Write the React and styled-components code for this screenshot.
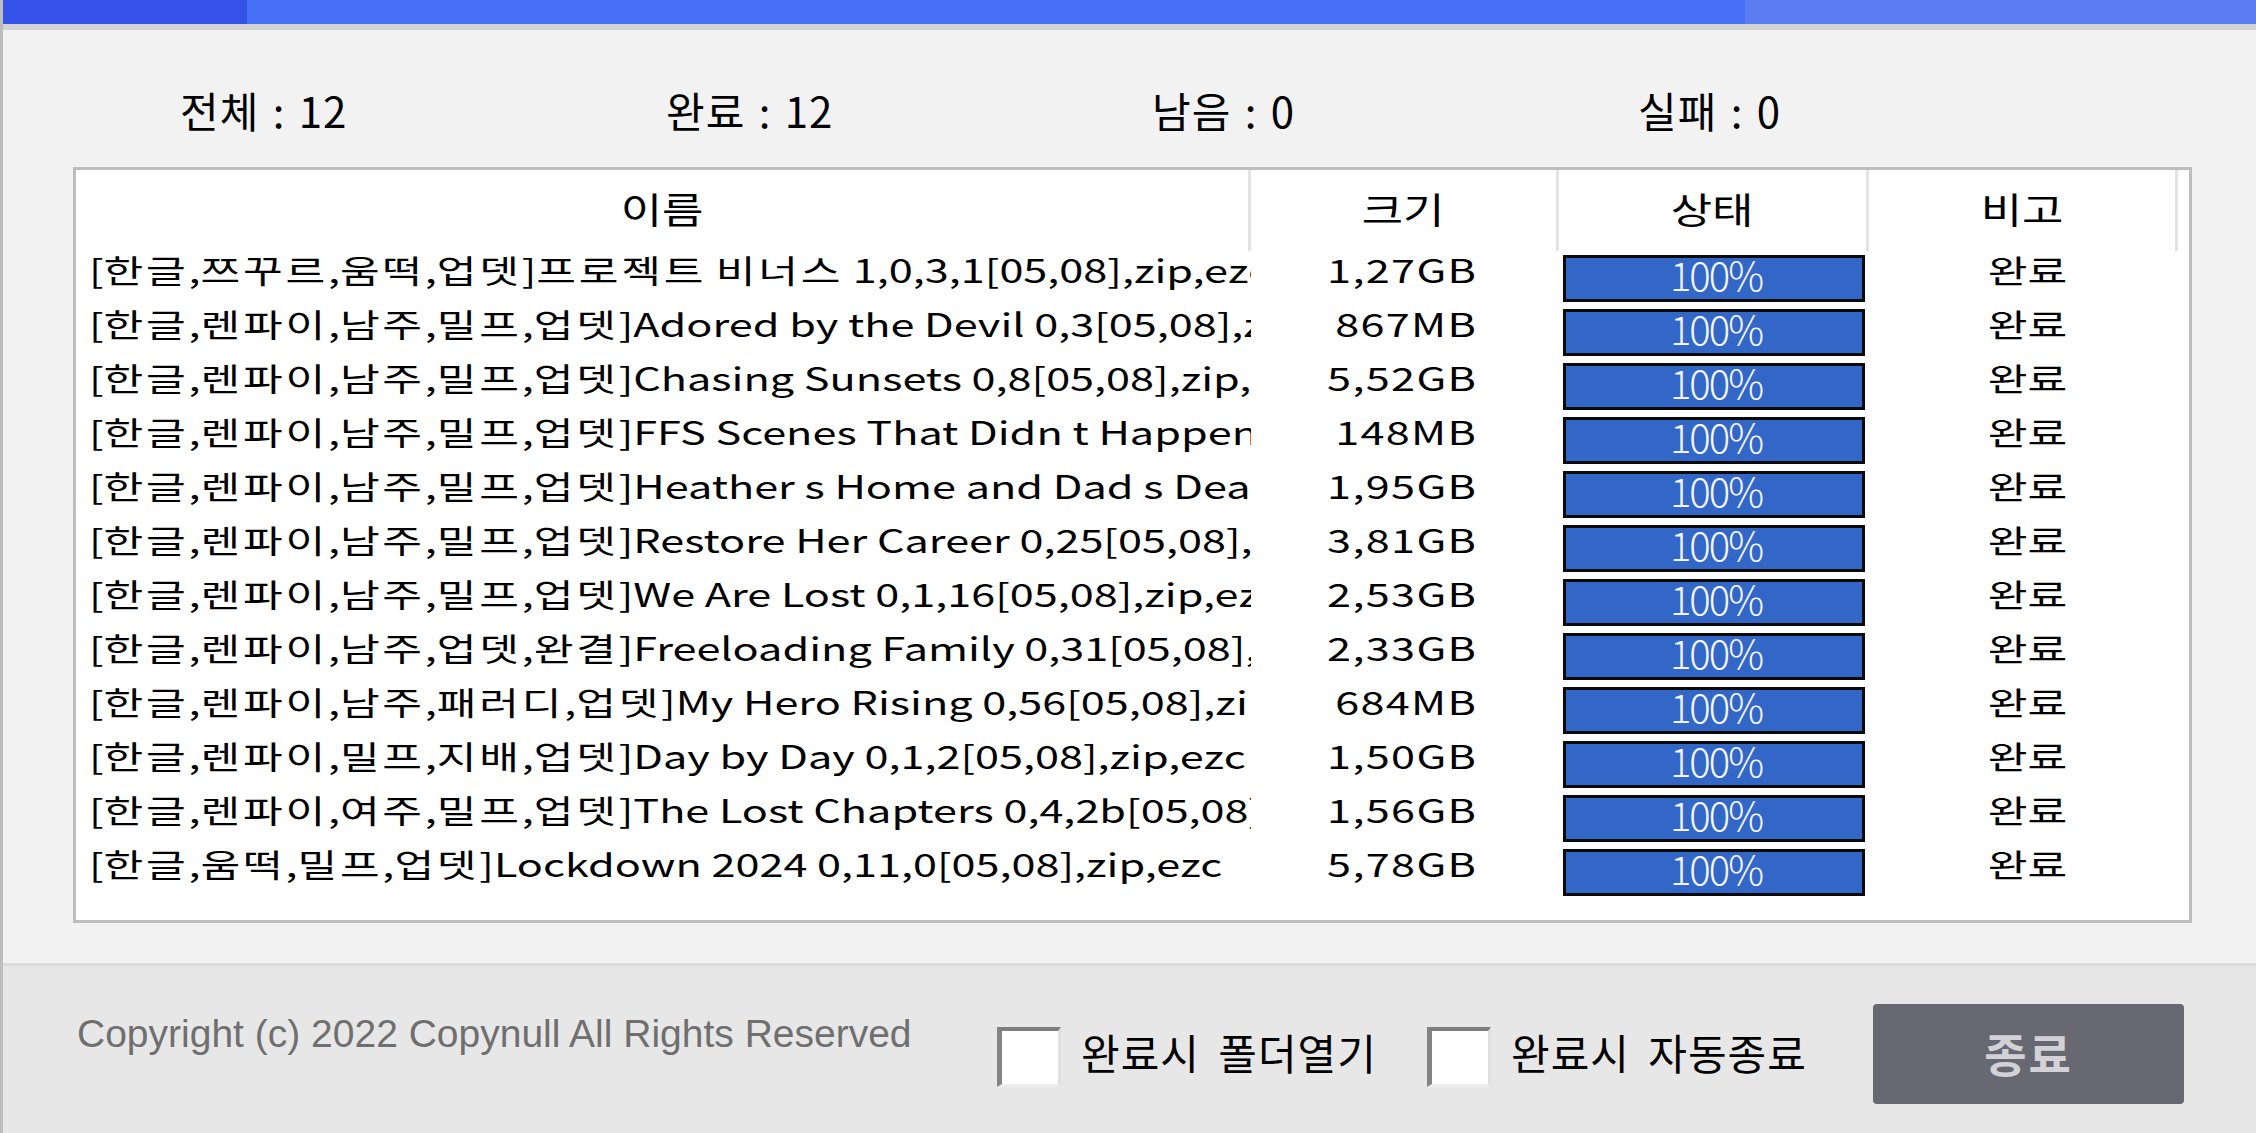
import { createGlobalStyle, styled } from "styled-components";

const GlobalStyle = createGlobalStyle`
  html, body {
    margin: 0;
    padding: 0;
    background: #f2f2f2;
  }
  * {
    box-sizing: border-box;
  }
`;

const KR = `"Noto Sans CJK KR", "Noto Sans", sans-serif`;
const COLUMNS = "1175px 308px 310px 309px 1fr";

const Window = styled.div`
  display: flex;
  flex-direction: column;
  width: 100%;
  height: 100vh;
  border-left: 3px solid #bdbdbd;
  background: #f2f2f2;
  font-family: ${KR};
  color: #000;
  overflow: hidden;
`;

const TopBar = styled.div`
  display: flex;
  height: 24px;
  flex-shrink: 0;
`;

const TopSegment = styled.div`
  width: ${(p) => p.$width || "auto"};
  flex: ${(p) => (p.$width ? "none" : "1")};
  background: ${(p) => p.$color};
`;

const TopShade = styled.div`
  height: 6px;
  flex-shrink: 0;
  background: #d4d4d4;
`;

const Main = styled.div`
  display: flex;
  flex-direction: column;
  padding: 55px 64px 40px 70px;
`;

const Stats = styled.div`
  display: grid;
  grid-template-columns: repeat(4, 486px);
  padding-left: 107px;
  height: 50px;
  margin-bottom: 32px;
`;

const StatItem = styled.div`
  font-size: 42px;
  line-height: 50px;
  letter-spacing: 1px;
  word-spacing: 3px;
  white-space: nowrap;
`;

const ListBox = styled.div`
  height: 756px;
  border: 3px solid #bdbdbd;
  background: #fff;
  display: flex;
  flex-direction: column;
`;

const HeaderRow = styled.div`
  display: grid;
  grid-template-columns: ${COLUMNS};
  height: 81px;
  flex-shrink: 0;
`;

const HeaderCell = styled.div`
  display: flex;
  align-items: center;
  justify-content: center;
  padding-bottom: 5px;
  font-size: 36px;
  line-height: 46px;
  border-right: ${(p) => (p.$divider ? "3px solid #e3e3e3" : "none")};
`;

// text of the bitmap font in the original is wider than it is tall
const Stretch = styled.span`
  display: inline-block;
  white-space: nowrap;
  transform: scaleX(${(p) => p.$scale || 1.35});
  transform-origin: ${(p) => p.$origin || "center"};
`;

const Hangul = styled.span`
  letter-spacing: 2px;
`;

const Latin = styled.span`
  letter-spacing: 0;
`;

const DataRow = styled.div`
  display: grid;
  grid-template-columns: ${COLUMNS};
  height: 54px;
  flex-shrink: 0;
`;

const TextCell = styled.div`
  font-size: 32px;
  line-height: 36px;
  letter-spacing: 1px;
  white-space: nowrap;
`;

const NameCell = styled(TextCell)`
  padding: 0 3px 0 13px;
  overflow-x: clip;
  overflow-y: visible;
`;

const SizeCell = styled(TextCell)`
  text-align: right;
  padding-right: 82px;
`;

const NoteCell = styled(TextCell)`
  text-align: center;
  letter-spacing: 0;
  padding-left: 8px;
`;

const StatusCell = styled.div`
  padding: 4px 0 0 4px;
`;

const ProgressBar = styled.div`
  width: 302px;
  height: 47px;
  border: 3px solid #0a0a0a;
  background: #3367c7;
  display: flex;
  align-items: center;
  justify-content: center;
  padding-bottom: 10px;
  padding-left: 4px;
`;

const ProgressLabel = styled.span`
  color: #f4f6fb;
  font-size: 40px;
  line-height: 1;
  letter-spacing: -2px;
  font-weight: 300;
`;

const Footer = styled.div`
  flex: 1;
  display: flex;
  align-items: center;
  padding: 8px 0 0 74px;
  border-top: 3px solid #dbdbdb;
  background: #e7e7e7;
`;

const Copyright = styled.div`
  align-self: flex-start;
  width: 920px;
  margin-top: 35px;
  font-family: "Liberation Sans", Arial, sans-serif;
  font-size: 39px;
  line-height: 50px;
  color: #6f6f6f;
  white-space: nowrap;
`;

const CheckOption = styled.label`
  display: flex;
  align-items: center;
  gap: 20px;
  width: ${(p) => p.$width}px;
  flex-shrink: 0;
`;

const CheckBox = styled.span`
  width: 64px;
  height: 60px;
  margin-top: 6px;
  background: #fff;
  border-top: 4px solid #7f7f7f;
  border-left: 5px solid #848484;
  border-right: 3px solid #e0e0e0;
  border-bottom: 3px solid #ececec;
  flex-shrink: 0;
`;

const CheckLabel = styled.span`
  font-size: 42px;
  line-height: 50px;
  letter-spacing: 1px;
  word-spacing: 8px;
  padding-bottom: 4px;
  white-space: nowrap;
`;

const CloseButton = styled.button`
  width: 311px;
  height: 100px;
  border: none;
  border-radius: 4px;
  background: #676872;
  color: #d2d2d6;
  font-family: ${KR};
  font-size: 46px;
  font-weight: 700;
  letter-spacing: 2px;
  padding: 0 0 4px;
  flex-shrink: 0;
`;

const rows = [
  { name: "[한글,쯔꾸르,움떡,업뎃]프로젝트 비너스 1,0,3,1[05,08],zip,ezc", size: "1,27GB" },
  { name: "[한글,렌파이,남주,밀프,업뎃]Adored by the Devil 0,3[05,08],zip,ezc", size: "867MB" },
  { name: "[한글,렌파이,남주,밀프,업뎃]Chasing Sunsets 0,8[05,08],zip,ezc", size: "5,52GB" },
  { name: "[한글,렌파이,남주,밀프,업뎃]FFS Scenes That Didn t Happen", size: "148MB" },
  { name: "[한글,렌파이,남주,밀프,업뎃]Heather s Home and Dad s Dea", size: "1,95GB" },
  { name: "[한글,렌파이,남주,밀프,업뎃]Restore Her Career 0,25[05,08],zip,ezc", size: "3,81GB" },
  { name: "[한글,렌파이,남주,밀프,업뎃]We Are Lost 0,1,16[05,08],zip,ezc", size: "2,53GB" },
  { name: "[한글,렌파이,남주,업뎃,완결]Freeloading Family 0,31[05,08],zip,ezc", size: "2,33GB" },
  { name: "[한글,렌파이,남주,패러디,업뎃]My Hero Rising 0,56[05,08],zip,ezc", size: "684MB" },
  { name: "[한글,렌파이,밀프,지배,업뎃]Day by Day 0,1,2[05,08],zip,ezc", size: "1,50GB" },
  { name: "[한글,렌파이,여주,밀프,업뎃]The Lost Chapters 0,4,2b[05,08],zip,ezc", size: "1,56GB" },
  { name: "[한글,움떡,밀프,업뎃]Lockdown 2024 0,11,0[05,08],zip,ezc", size: "5,78GB" },
];

const stats = [
  { label: "전체", value: 12 },
  { label: "완료", value: 12 },
  { label: "남음", value: 0 },
  { label: "실패", value: 0 },
];

const headers = ["이름", "크기", "상태", "비고"];

// hangul and latin runs are spaced differently, as in the original font
const MixedText = ({ text }) =>
  text
    .split(/([가-힣]+)/)
    .filter(Boolean)
    .map((part, i) =>
      /[가-힣]/.test(part) ? (
        <Hangul key={i}>{part}</Hangul>
      ) : (
        <Latin key={i}>{part}</Latin>
      ),
    );

const App = () => {
  return (
    <>
      <GlobalStyle />
      <Window>
        <TopBar>
          <TopSegment $width="244px" $color="#3452e8" />
          <TopSegment $width="1498px" $color="#4770f9" />
          <TopSegment $color="#5a7ef2" />
        </TopBar>
        <TopShade />
        <Main>
          <Stats>
            {stats.map((s) => (
              <StatItem key={s.label}>
                {s.label} : {s.value}
              </StatItem>
            ))}
          </Stats>
          <ListBox>
            <HeaderRow>
              {headers.map((h) => (
                <HeaderCell key={h} $divider>
                  <Stretch $scale={1.25}>{h}</Stretch>
                </HeaderCell>
              ))}
              <HeaderCell />
            </HeaderRow>
            {rows.map((row, i) => (
              <DataRow key={i}>
                <NameCell>
                  <Stretch $origin="left">
                    <MixedText text={row.name} />
                  </Stretch>
                </NameCell>
                <SizeCell>
                  <Stretch $origin="right">{row.size}</Stretch>
                </SizeCell>
                <StatusCell>
                  <ProgressBar>
                    <ProgressLabel>100%</ProgressLabel>
                  </ProgressBar>
                </StatusCell>
                <NoteCell>
                  <Stretch>완료</Stretch>
                </NoteCell>
                <div />
              </DataRow>
            ))}
          </ListBox>
        </Main>
        <Footer>
          <Copyright>Copyright (c) 2022 Copynull All Rights Reserved</Copyright>
          <CheckOption $width={430}>
            <CheckBox />
            <CheckLabel>완료시 폴더열기</CheckLabel>
          </CheckOption>
          <CheckOption $width={446}>
            <CheckBox />
            <CheckLabel>완료시 자동종료</CheckLabel>
          </CheckOption>
          <CloseButton>종료</CloseButton>
        </Footer>
      </Window>
    </>
  );
};

export default App;
